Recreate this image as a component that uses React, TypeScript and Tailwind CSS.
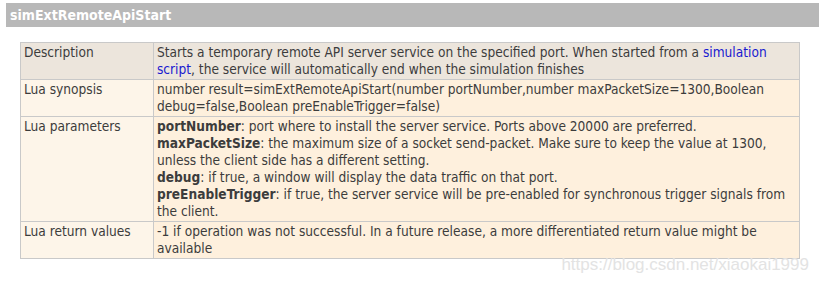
import React from "react";

type Row = {
	label: string;
	content: React.ReactNode;
	head?: boolean;
};

const rows: Row[] = [
	{
		label: "Description",
		head: true,
		content: (
			<>
				Starts a temporary remote API server service on the specified port. When started from a{" "}
				<a href="#" className="text-[#1a1ad0]">
					simulation
					<br />
					script
				</a>
				, the service will automatically end when the simulation finishes
			</>
		),
	},
	{
		label: "Lua synopsis",
		content: (
			<>
				number result=simExtRemoteApiStart(number portNumber,number maxPacketSize=1300,Boolean
				<br />
				debug=false,Boolean preEnableTrigger=false)
			</>
		),
	},
	{
		label: "Lua parameters",
		content: (
			<>
				<b>portNumber</b>: port where to install the server service. Ports above 20000 are preferred.
				<br />
				<b>maxPacketSize</b>: the maximum size of a socket send-packet. Make sure to keep the value at 1300,
				<br />
				unless the client side has a different setting.
				<br />
				<b>debug</b>: if true, a window will display the data traffic on that port.
				<br />
				<b>preEnableTrigger</b>: if true, the server service will be pre-enabled for synchronous trigger signals from
				<br />
				the client.
			</>
		),
	},
	{
		label: "Lua return values",
		content: (
			<>
				-1 if operation was not successful. In a future release, a more differentiated return value might be
				<br />
				available
			</>
		),
	},
];

export default function App() {
	return (
		<div className="relative h-[281px] w-[819px] overflow-hidden bg-white pt-[3px] font-['DejaVu_Sans_Condensed',Tahoma,sans-serif] text-[#3c3c3c]">
			{/* section title bar */}
			<div className="ml-[6px] flex h-[24px] items-center bg-[#b8b8b8] px-[4px] text-[14px] font-bold text-white">
				simExtRemoteApiStart
			</div>

			<table className="mt-[15px] ml-[20px] w-[780px] border-collapse text-[13.6px] leading-[17px]">
				<tbody>
					{rows.map((row) => (
						<tr key={row.label}>
							<td
								className={`w-[133px] border border-[#c9c9c9] px-[3px] py-[1px] align-top whitespace-nowrap ${
									row.head ? "bg-[#ece5dc]" : "bg-[#fdf5e9]"
								}`}
							>
								{row.label}
							</td>
							<td
								className={`border border-[#c9c9c9] px-[3px] py-[1px] align-top whitespace-nowrap ${
									row.head ? "bg-[#ece5dc]" : "bg-[#fef0dd]"
								}`}
							>
								{row.content}
							</td>
						</tr>
					))}
				</tbody>
			</table>

			{/* watermark */}
			<div className="absolute top-[252px] right-[10px] font-['Liberation_Sans',Arial,sans-serif] text-[17px] text-[#e3e3e3]">
				https://blog.csdn.net/xiaokai1999
			</div>
		</div>
	);
}
